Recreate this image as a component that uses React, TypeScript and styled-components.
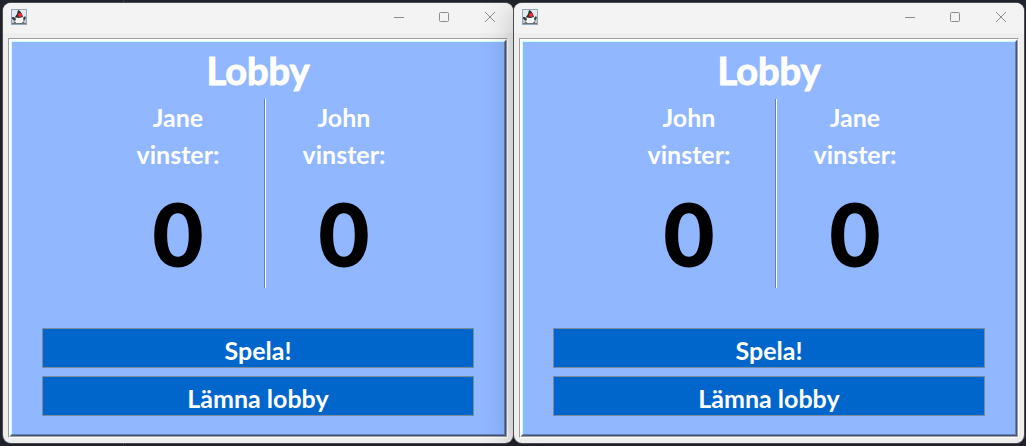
import React from "react";
import styled, { createGlobalStyle } from "styled-components";

const GlobalStyle = createGlobalStyle`
  * { box-sizing: border-box; }
  html, body, #root { height: 100%; }
  body {
    margin: 0;
    background: #23262f;
    font-family: "Comic Sans MS", Lato, "Open Sans", sans-serif;
  }
`;

const Desktop = styled.main`
  display: flex;
  gap: 1px;
  min-height: 100%;
  padding: 3px 2px 3px 3px;
  background: linear-gradient(to right, transparent 123px, #3d4048 123px, #3d4048 124px, transparent 124px);
`;

const Window = styled.section`
  position: relative;
  flex: 1;
  display: flex;
  flex-direction: column;
  background: #eeeeee;
  border-radius: 8px;
  box-shadow: 0 0 0 1px #4b4d53, 0 6px 32px rgba(0, 0, 0, 0.25);
`;

const TitleBar = styled.header`
  display: flex;
  justify-content: space-between;
  height: 30px;
  padding-left: 8px;
  background: #f3f3f3;
  border-radius: 8px 8px 0 0;
`;

const AppIcon = styled.svg`
  width: 16px;
  height: 16px;
  margin-top: 6px;
`;

const Controls = styled.div`
  display: flex;
`;

const ControlButton = styled.button`
  display: flex;
  align-items: center;
  justify-content: center;
  width: 46px;
  height: 28px;
  padding: 0;
  border: 0;
  background: none;
  color: #8c8c8c;

  svg { display: block; }
`;

const Etched = styled.div`
  flex: 1;
  display: flex;
  margin: 5px;
  border: 1px solid #9c9c9c;
  border-right-color: #ffffff;
  border-bottom-color: #ffffff;
`;

const EtchedInner = styled.div`
  flex: 1;
  display: flex;
  border: 1px solid #ffffff;
  border-right-color: #a0a0a0;
  border-bottom-color: #a0a0a0;
`;

const Bevel = styled.div`
  flex: 1;
  display: flex;
  border: 1px solid #ffffff;
  border-right-color: #3f5579;
  border-bottom-color: #3f5579;
`;

const Panel = styled.div`
  flex: 1;
  display: flex;
  flex-direction: column;
  align-items: center;
  padding: 0 30px 18px;
  background: #90b7ff;
  border: 1px solid #c8ffff;
  border-right-color: #647fb2;
  border-bottom-color: #647fb2;
  color: #ffffff;
  font-weight: 700;
`;

const Heading = styled.h1`
  margin: 0;
  font-size: 38px;
  line-height: 57px;
  -webkit-text-stroke: 1px currentColor;
`;

const Scores = styled.div`
  display: flex;
  height: 189px;
  padding-left: 6px;
`;

const Divider = styled.div`
  width: 2px;
  margin: 0 36px 0 44px;
  background: linear-gradient(to right, #647fb2 1px, #ffffff 1px);
`;

const Player = styled.div`
  width: 84px;
  text-align: center;
  white-space: nowrap;
`;

const PlayerLine = styled.p`
  margin: 0;
  font-size: 25px;
  line-height: 37px;
`;

const Wins = styled.p`
  margin: 0;
  color: #000000;
  font-size: 86px;
  line-height: 120px;
  -webkit-text-stroke: 2px currentColor;
`;

const Actions = styled.div`
  display: flex;
  flex-direction: column;
  gap: 8px;
  width: 100%;
  margin-top: auto;
`;

const ActionButton = styled.button`
  height: 40px;
  padding: 4px 0 0;
  border: 1px solid #7a8a99;
  background: #0066cc;
  color: #ffffff;
  font: inherit;
  font-size: 25px;
  line-height: 34px;
`;

const DukeIcon = () => (
  <AppIcon viewBox="0 0 16 16" aria-hidden="true">
    <rect x="0.5" y="0.5" width="15" height="15" fill="#e2e9ef" stroke="#8fa6bb" />
    <path d="M1 15V12L4 9H12L15 11V15Z" fill="#c3c7ca" />
    <path d="M7 1L9 2L11 5L12 8L9 9L5 9L4 8L6 5Z" fill="#2b3034" />
    <path d="M5 8.5L8 9L12 8.5L12 14H4Z" fill="#f8f9f9" />
    <path d="M1 8L3 8L5 10L4 12L1 10ZM12 9L14 7L15 9L13 12Z" fill="#3c4247" />
    <path d="M1 14.5H15" stroke="#6d7479" />
    <path d="M3 13L5 14M11 14L13 13" stroke="#4d5358" />
    <ellipse cx="9" cy="6" rx="2.2" ry="1.9" fill="#f02a2c" />
  </AppIcon>
);

const ControlGlyph = ({ d }: { d: string }) => (
  <svg width="12" height="12" viewBox="0 0 12 12" fill="none" stroke="currentColor" aria-hidden="true">
    <path d={d} />
  </svg>
);

const CONTROLS = [
  { label: "Minimera", d: "M2 6.5H12" },
  { label: "Maximera", d: "M2.5 1.5H9.5Q10.5 1.5 10.5 2.5V9.5Q10.5 10.5 9.5 10.5H2.5Q1.5 10.5 1.5 9.5V2.5Q1.5 1.5 2.5 1.5Z" },
  { label: "Stäng", d: "M1 1L11 11M11 1L1 11" },
];

type PlayerScore = { name: string; wins: number };

const PlayerScoreView = ({ name, wins }: PlayerScore) => (
  <Player>
    <PlayerLine>{name}</PlayerLine>
    <PlayerLine>vinster:</PlayerLine>
    <Wins>{wins}</Wins>
  </Player>
);

const LobbyWindow = ({ players }: { players: [PlayerScore, PlayerScore] }) => (
  <Window>
    <TitleBar>
      <DukeIcon />
      <Controls>
        {CONTROLS.map((c) => (
          <ControlButton key={c.label} type="button" aria-label={c.label}>
            <ControlGlyph d={c.d} />
          </ControlButton>
        ))}
      </Controls>
    </TitleBar>
    <Etched>
      <EtchedInner>
        <Bevel>
          <Panel>
            <Heading>Lobby</Heading>
            <Scores>
              <PlayerScoreView {...players[0]} />
              <Divider />
              <PlayerScoreView {...players[1]} />
            </Scores>
            <Actions>
              <ActionButton type="button">Spela!</ActionButton>
              <ActionButton type="button">Lämna lobby</ActionButton>
            </Actions>
          </Panel>
        </Bevel>
      </EtchedInner>
    </Etched>
  </Window>
);

const jane: PlayerScore = { name: "Jane", wins: 0 };
const john: PlayerScore = { name: "John", wins: 0 };

export default function App() {
  return (
    <>
      <GlobalStyle />
      <Desktop>
        <LobbyWindow players={[jane, john]} />
        <LobbyWindow players={[john, jane]} />
      </Desktop>
    </>
  );
}
